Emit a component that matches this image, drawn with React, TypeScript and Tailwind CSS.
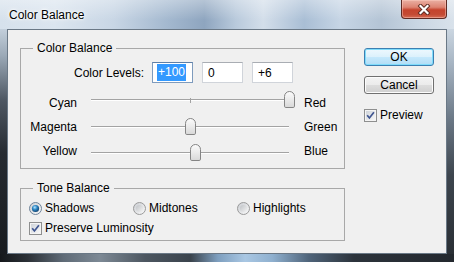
import React from "react";

function Checkbox() {
  return (
    <svg width="13" height="13" viewBox="0 0 13 13" className="shrink-0">
      <defs>
        <linearGradient id="cbin" x1="0" y1="0" x2="1" y2="1">
          <stop offset="0" stopColor="#cfd4da" />
          <stop offset="1" stopColor="#f7f7f7" />
        </linearGradient>
      </defs>
      <rect x="0.5" y="0.5" width="12" height="12" fill="#f4f4f4" stroke="#8e8f8f" />
      <rect x="2" y="2" width="9" height="9" fill="url(#cbin)" />
      <path d="M3.2 6.3 L5.4 9 L9.9 3.2" fill="none" stroke="#3f5590" strokeWidth="1.7" />
    </svg>
  );
}

function Radio({ checked }: { checked: boolean }) {
  return (
    <svg width="13" height="13" viewBox="0 0 13 13" className="shrink-0">
      <defs>
        <linearGradient id="rbg" x1="0" y1="0" x2="1" y2="1">
          <stop offset="0" stopColor="#c9ccd1" />
          <stop offset="1" stopColor="#fbfbfb" />
        </linearGradient>
        <radialGradient id="rsel" cx="0.4" cy="0.35" r="0.7">
          <stop offset="0" stopColor="#b6e6ff" />
          <stop offset="0.45" stopColor="#2c86c4" />
          <stop offset="1" stopColor="#0e3a66" />
        </radialGradient>
        <linearGradient id="runs" x1="0" y1="0" x2="1" y2="1">
          <stop offset="0" stopColor="#bfc2c6" />
          <stop offset="1" stopColor="#f3f3f3" />
        </linearGradient>
      </defs>
      <circle cx="6.5" cy="6.5" r="6" fill="url(#rbg)" stroke={checked ? "#6f849a" : "#9a9a9a"} />
      <circle cx="6.5" cy="6.5" r="3.6" fill={checked ? "url(#rsel)" : "url(#runs)"} />
    </svg>
  );
}

function Slider({ value, top }: { value: number; top: string }) {
  const center = 99 + value * 0.99;
  return (
    <div className={`relative w-[198px] h-[17px] ml-[14px] self-start ${top}`}>
      <div className="absolute left-0 right-0 top-[8px] h-[2px] border-t border-t-[#a3a3a3] border-b border-b-[#ffffff]" />
      <div className="absolute left-[99px] top-[7px] h-[5px] w-px bg-[#a3a3a3]" />
      <div
        className="absolute top-0 w-[11px] h-[17px] rounded-t-[6px] rounded-b-[2px] border border-[#858585] bg-[image:linear-gradient(180deg,#fbfbfb_0%,#ececec_45%,#d9d9d9_100%)]"
        style={{ left: `${center - 5.5}px` }}
      />
    </div>
  );
}

function SliderRow({ left, right, value, top }: { left: string; right: string; value: number; top: string }) {
  return (
    <div className="flex h-[24px] items-center">
      <div className="w-[56px] text-right">{left}</div>
      <Slider value={value} top={top} />
      <div className="ml-[15px]">{right}</div>
    </div>
  );
}

export default function App() {
  return (
    <div className="w-[454px] h-[262px] flex flex-col overflow-hidden font-['Liberation_Sans',Arial,sans-serif] text-[12px] leading-[14px] text-black bg-[#1a1d21]">
      {/* title bar */}
      <div className="h-[29px] shrink-0 flex items-start justify-between bg-[image:linear-gradient(180deg,rgba(255,255,255,0.35)_0%,rgba(255,255,255,0)_70%),linear-gradient(90deg,#d6e1ec_0%,#dbe5ef_12%,#c8d6e5_25%,#a3b8cf_37%,#8ea5bf_45%,#b9cadc_52%,#d3deea_58%,#a9bed5_67%,#c6d5e5_75%,#b4c4d5_84%,#c9d6e3_92%,#d9e2eb_100%)]">
        <div className="pl-[9px] pt-[8px] [text-shadow:0_0_6px_#fff,0_0_3px_#fff,0_0_2px_#fff]">Color Balance</div>
        <div className="mr-[7px] w-[46px] h-[19px] rounded-b-[4px] border border-t-0 border-[#5e2b24] bg-[image:linear-gradient(180deg,#eab0a3_0%,#dd8473_40%,#c5432d_55%,#c44a33_80%,#d56b54_100%)] shadow-[inset_0_0_0_1px_rgba(255,210,200,0.45)] flex items-center justify-center">
          <svg width="14" height="11" viewBox="0 0 14 11">
            <path d="M3.5 2 L10.5 9 M10.5 2 L3.5 9" stroke="#5a2a22" strokeWidth="4" strokeLinecap="square" />
            <path d="M3.5 2 L10.5 9 M10.5 2 L3.5 9" stroke="#ffffff" strokeWidth="2.2" strokeLinecap="square" />
          </svg>
        </div>
      </div>

      {/* middle */}
      <div className="flex flex-1">
        <div className="w-[7px] bg-[image:linear-gradient(180deg,#c3cfdb_0%,#9aa8b6_12%,#4d5661_32%,#262b31_55%,#181b1f_100%)]" />
        <div className="w-[440px] border border-[#6a7886] bg-[#f0f0f0] flex">
          {/* left column */}
          <div className="pl-[12px] pt-[11px] flex flex-col">
            <fieldset className="w-[325px] border border-[#a8a8a8] pb-[5px]">
              <legend className="ml-[12px] px-[4px] leading-[14px]">Color Balance</legend>
              <div className="mt-[7px] flex items-center h-[21px]">
                <div className="w-[123px] text-right">Color Levels:</div>
                <div className="ml-[8px] flex gap-[9px]">
                  <div className="w-[41px] h-[21px] border border-[#7e9bbd] border-t-[#5f7fa6] bg-white pl-[4px] flex items-center">
                    <span className="bg-[#3399ff] text-white leading-[17px] px-px">+100</span>
                  </div>
                  <div className="w-[41px] h-[21px] border border-[#d0d4da] border-t-[#a9adb3] bg-white pl-[5px] flex items-center">0</div>
                  <div className="w-[41px] h-[21px] border border-[#d0d4da] border-t-[#a9adb3] bg-white pl-[5px] flex items-center">+6</div>
                </div>
              </div>
              <div className="mt-[8px] flex flex-col">
                <SliderRow left="Cyan" right="Red" value={100} top="mt-0" />
                <SliderRow left="Magenta" right="Green" value={0} top="mt-[3px]" />
                <SliderRow left="Yellow" right="Blue" value={6} top="mt-[5px]" />
              </div>
            </fieldset>

            <fieldset className="mt-[12px] w-[325px] border border-[#a8a8a8] pb-[4px]">
              <legend className="ml-[12px] px-[4px] leading-[14px]">Tone Balance</legend>
              <div className="mt-[5px] pl-[8px] flex h-[16px] items-center">
                <div className="w-[104px] flex items-center gap-[3px]">
                  <Radio checked={true} />
                  <span>Shadows</span>
                </div>
                <div className="w-[104px] flex items-center gap-[3px]">
                  <Radio checked={false} />
                  <span>Midtones</span>
                </div>
                <div className="w-[104px] flex items-center gap-[3px]">
                  <Radio checked={false} />
                  <span>Highlights</span>
                </div>
              </div>
              <div className="mt-[4px] pl-[8px] flex h-[16px] items-center gap-[3px]">
                <Checkbox />
                <span>Preserve Luminosity</span>
              </div>
            </fieldset>
          </div>

          {/* right column */}
          <div className="ml-[19px] pt-[18px] flex flex-col w-[70px]">
            <div className="h-[18px] w-[70px] rounded-[3px] border border-[#3c7fb1] bg-[image:linear-gradient(180deg,#eef8fe_0%,#dcf1fc_50%,#c6e9fc_50%,#b1ddf6_100%)] shadow-[inset_0_0_0_1px_#7fdcfb] flex items-center justify-center">
              OK
            </div>
            <div className="mt-[10px] h-[18px] w-[70px] rounded-[3px] border border-[#707070] bg-[image:linear-gradient(180deg,#f3f3f3_0%,#ebebeb_50%,#dddddd_50%,#cfcfcf_100%)] shadow-[inset_0_0_0_1px_#fcfcfc] flex items-center justify-center">
              Cancel
            </div>
            <div className="mt-[13px] h-[16px] flex items-center gap-[3px]">
              <Checkbox />
              <span>Preview</span>
            </div>
          </div>
        </div>
        <div className="w-[7px] bg-[image:linear-gradient(180deg,#cbd6e1_0%,#a7b5c3_15%,#6b7886_40%,#3d454e_65%,#2a2f35_100%)]" />
      </div>

      {/* bottom frame */}
      <div className="h-[8px] shrink-0 bg-[image:linear-gradient(90deg,#15181b_0%,#2b3036_6%,#5f6b77_14%,#7d8995_22%,#4c5660_32%,#3a434c_42%,#7e9fbf_48%,#a9c7e3_54%,#8fb0cf_60%,#4f647a_68%,#2c333b_78%,#23282e_100%)]" />
    </div>
  );
}
